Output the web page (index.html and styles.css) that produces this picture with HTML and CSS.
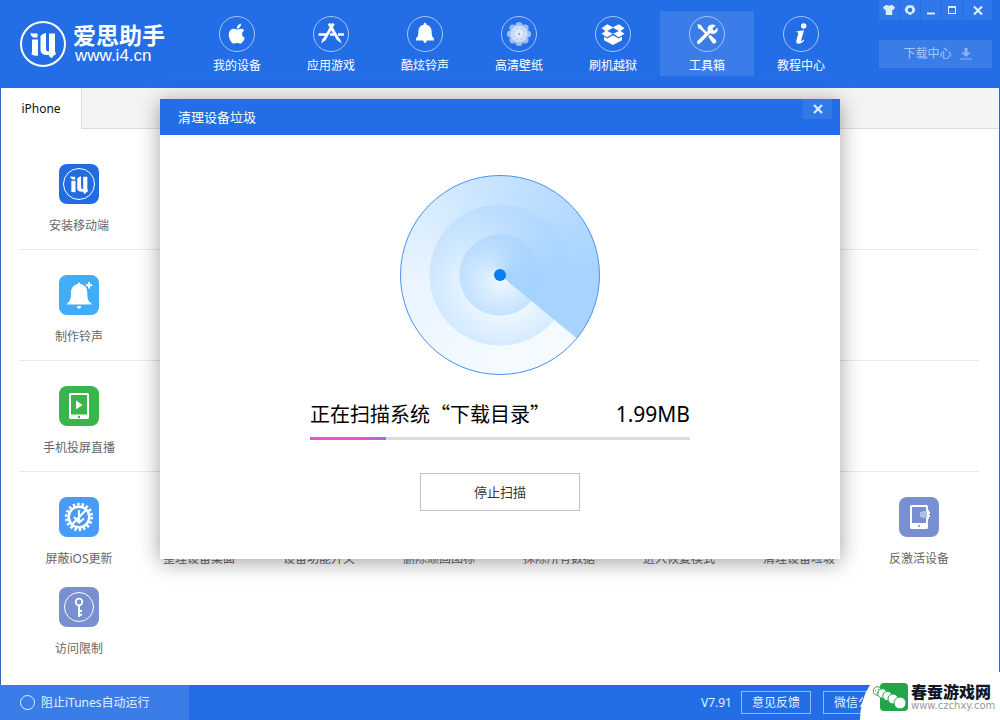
FILE: index.html
```html
<!DOCTYPE html>
<html lang="zh-CN">
<head>
<meta charset="utf-8">
<meta name="viewport" content="width=device-width, initial-scale=1">
<title>爱思助手</title>
<link rel="stylesheet" href="styles.css">
</head>
<body>
<svg class="defs" aria-hidden="true">
  <symbol id="i4" viewBox="0 0 46 46">
    <path d="M10.500 11.500q1 1.200 3.500 1h3.500v4h-4q-3-1-3-5zM12 18.500h6v16q-4 1-7-1.500l1-1zM20.500 15q2-2.500 5.500-3v16q0 2.500 3 2.500V12.500h6V30q1 2 .5 4-3 0-3 3-3.500-.5-3.500-3-8.500.5-8.500-5z"/>
  </symbol>
</svg>
<div class="app">
  <header class="header">
    <a class="logo" href="#">
      <svg class="logo-mark" viewBox="0 0 46 46"><circle cx="23" cy="23" r="22" fill="none" stroke="#fff" stroke-width="2"/><use href="#i4" fill="#fff"/></svg>
      <span class="logo-text"><span class="logo-name">爱思助手</span><span class="logo-url">www.i4.cn</span></span>
    </a>
    <nav class="nav">
      <a class="nav-item" href="#"><svg class="nav-icon" viewBox="0 0 36 36"><circle class="ring" cx="18" cy="18" r="17.500"/><path d="M18 13.500c1.500 0 2.700-1 4.400-.8 1.200.1 2.200.6 2.900 1.600-3.300 2.200-2.700 6.200.5 7.500-.7 2.100-2.200 5-3.900 5.700-1.500.5-2.300-.6-3.900-.6s-2.400 1.100-3.800.6c-2.700-1-5-6.600-4.300-10.300.6-3.300 3.400-4.900 5.900-4.200.8.2 1.500.5 2.200.5zM17.800 12.700c0-2.800 1.700-4.800 4.200-5.300.2 2.800-1.500 5.100-4.200 5.300z"/></svg>我的设备</a>
      <a class="nav-item" href="#"><svg class="nav-icon" viewBox="0 0 36 36"><circle class="ring" cx="18" cy="18" r="17.500"/><path class="line" d="M16 7.500l9.200 16M20.500 7.500L11 24" stroke-width="2.800"/><path class="line" d="M5.500 18.500h8.500M17 18.500h4M25 18.500h6" stroke-width="2.500"/><path d="M9.500 22.500l2.800 1.500-4 3.500zM24 24l2.600-1.500 2.200 5z"/></svg>应用游戏</a>
      <a class="nav-item" href="#"><svg class="nav-icon" viewBox="0 0 36 36"><circle class="ring" cx="18" cy="18" r="17.500"/><path d="M18 6.800q1.300 0 1.200 1.700c3.600.8 5.500 3.500 5.500 7.300 0 3.400.4 5.500 2.300 6.500v2.200h-7.200q-.2 2.400-1.800 2.400t-1.800-2.400H9v-2.200c1.900-1 2.300-3.100 2.300-6.500 0-3.800 1.900-6.500 5.500-7.300-.1-1.200.3-1.700 1.200-1.700z"/></svg>酷炫铃声</a>
      <a class="nav-item" href="#"><svg class="nav-icon" viewBox="0 0 36 36"><circle class="ring" cx="18" cy="18" r="17.500"/><g opacity=".55"><circle cx="18" cy="9.500" r="3.600"/><circle cx="24" cy="12" r="3.600"/><circle cx="26.500" cy="18" r="3.600"/><circle cx="24" cy="24" r="3.600"/><circle cx="18" cy="26.500" r="3.600"/><circle cx="12" cy="24" r="3.600"/><circle cx="9.500" cy="18" r="3.600"/><circle cx="12" cy="12" r="3.600"/></g><circle cx="18" cy="18" r="8.500" opacity=".5"/><circle cx="18" cy="18" r="5" opacity=".7"/><circle cx="18" cy="18" r="1" fill="#6c9ff0"/></svg>高清壁纸</a>
      <a class="nav-item" href="#"><svg class="nav-icon" viewBox="0 0 36 36"><circle class="ring" cx="18" cy="18" r="17.500"/><path d="M12.200 8.200L18 11.300l5.800-3.100 5.700 4-4 2.900 4 2.700-5.600 3.400L18 17.600l-5.900 3.600-5.600-3.400 4-2.700-4-2.900zM18 11.800l-5.700 3.200L18 18l5.700-3z" fill-rule="evenodd"/><path d="M9 20.800l3.300 1.800 5.700-3.400 5.700 3.400 3.300-1.800v3.400l-9 4.800-9-4.800z"/></svg>刷机越狱</a>
      <a class="nav-item active" href="#" aria-current="page"><svg class="nav-icon" viewBox="0 0 36 36"><circle class="ring" cx="18" cy="18" r="17.500"/><path d="M8.500 8l3.500 1 2 3.300 4.300 4.200-1.800 1.800-4.300-4.200L9 12z"/><path d="M19.200 20.700l2-2 5.500 5q1.400 1.700 0 3.200-1.500 1.400-3.200 0z"/><path class="line" d="M9.700 26.300L20.500 15.600" stroke-width="3.500" stroke-linecap="round"/><path d="M26.800 9.300L23.500 12.500l.5 1.700 1.700.4 2.800-3.100q.8 3.500-1.700 5.500-2.600 1.700-5.500.2l-2.500-2.600q-1-3 1.300-5 2.500-2 6.700-.3z"/></svg>工具箱</a>
      <a class="nav-item" href="#"><svg class="nav-icon" viewBox="0 0 36 36"><circle class="ring" cx="18" cy="18" r="17.500"/><circle cx="20.700" cy="10" r="2.700"/><path d="M13.700 15.200l7.300-1-3 10.500q.2 1 2.500-1.300l.8.800q-2.800 3.700-5.700 3.600-3-.2-2.200-3.400l1.900-6.800q.4-1.500-1.600-1.400z"/></svg>教程中心</a>
    </nav>
    <div class="header-side">
      <div class="window-controls">
        <button class="win-btn" aria-label="皮肤"><svg viewBox="0 0 12 12"><path d="M3.500.8q2.500 2 5 0L12 3l-1.300 3-1.400-.5V11H2.700V5.500L1.300 6 0 3z"/></svg></button>
        <button class="win-btn" aria-label="设置"><svg viewBox="0 0 12 12"><path d="M4.500 1.500L6 .7l1.500.8 2 .2.700 1.900 1.100 1.600-.4 1.600-.7 2-1.900.7L6.500 11h-1l-1.800-1.500-1.900-.7-.7-2-.4-1.600 1.100-1.600.7-1.900z"/><circle cx="6" cy="6" r="2.300" fill="#2f75e7"/></svg></button>
        <button class="win-btn" aria-label="最小化"><svg viewBox="0 0 12 12"><path d="M2 8.500h8v2H2z"/></svg></button>
        <button class="win-btn" aria-label="最大化"><svg viewBox="0 0 12 12"><path d="M2 2h8v8H2zM3 4v5h6V4z" fill-rule="evenodd"/></svg></button>
        <button class="win-btn wide" aria-label="关闭"><svg viewBox="0 0 12 12"><path class="cross" d="M2 2.500l8 8M10 2.500l-8 8"/></svg></button>
      </div>
      <button class="download">下载中心<svg viewBox="0 0 12 12"><path d="M4.500 0h3v4.500H11L6 9 1 4.500h3.500zM0 10.500h12v1H0z"/></svg></button>
    </div>
  </header>

  <main class="main">
    <div class="tabs"><button class="tab">iPhone</button></div>
    <div class="tools">
      <section class="tool-row">
        <button class="tool"><svg class="tool-icon install" viewBox="0 0 40 40"><circle cx="20" cy="20" r="15.500" fill="none" stroke="#fff"/><use href="#i4" x="4" y="4" width="32" height="32"/></svg>安装移动端</button>
      </section>
      <section class="tool-row">
        <button class="tool"><svg class="tool-icon ring-tone" viewBox="0 0 40 40"><path d="M20 7.500c1 0 1.300.7 1.300 1.600 4.800 1 7 4.200 7 9.200 0 5 .7 8.500 4.100 10v1.200H8.200v-1.200c2.900-1.500 3.800-5 3.800-10 0-5 2.200-8.200 6.700-9.200 0-.9.400-1.600 1.300-1.600zM17.700 31h4.600q-.3 2.700-2.300 2.700T17.700 31z"/><path d="M29 7h2v2.200h2.200v2H31v2.200h-2v-2.200h-2.200v-2H29z"/></svg>制作铃声</button>
      </section>
      <section class="tool-row">
        <button class="tool"><svg class="tool-icon cast" viewBox="0 0 40 40"><path d="M11.500 7h17q1.500 0 1.500 1.500v23q0 1.500-1.500 1.500h-17q-1.500 0-1.500-1.500v-23Q10 7 11.500 7zM12 9v19.500h16V9z" fill-rule="evenodd"/><path d="M17 14.500l6.500 4.500-6.500 4.500z"/><circle cx="20" cy="31" r="1.200" fill="#39b54a"/></svg>手机投屏直播</button>
      </section>
      <section class="tool-row last">
        <button class="tool"><svg class="tool-icon update" viewBox="0 0 40 40"><circle cx="20" cy="20" r="12.700" fill="none" stroke="#fff" stroke-width="3" stroke-dasharray="2.400 2.033"/><circle cx="20" cy="20" r="10.300" fill="none" stroke="#fff" stroke-width="2.500"/><path class="line" d="M20 13v11M15 20l5 5.500 5-4M28 12L13 27.500" stroke-width="2.200"/></svg>屏蔽iOS更新</button>
        <button class="tool"><svg class="tool-icon update" viewBox="0 0 40 40"><path d="M10 10h8v8h-8zM22 10h8v8h-8zM10 22h8v8h-8zM22 22h8v8h-8z"/></svg>整理设备桌面</button>
        <button class="tool"><svg class="tool-icon update" viewBox="0 0 40 40"><path d="M10 13h20v3H10zM10 24h20v3H10z"/></svg>设备功能开关</button>
        <button class="tool"><svg class="tool-icon update" viewBox="0 0 40 40"><path d="M12 14h16l-2 18H14zM10 10h20v2H10z"/></svg>删除顽固图标</button>
        <button class="tool"><svg class="tool-icon update" viewBox="0 0 40 40"><path d="M12 14h16l-2 18H14zM10 10h20v2H10z"/></svg>抹除所有数据</button>
        <button class="tool"><svg class="tool-icon update" viewBox="0 0 40 40"><path d="M13 8h14v24H13z"/></svg>进入恢复模式</button>
        <button class="tool"><svg class="tool-icon update" viewBox="0 0 40 40"><path d="M12 14h16l-2 18H14zM10 10h20v2H10z"/></svg>清理设备垃圾</button>
        <button class="tool"><svg class="tool-icon lock" viewBox="0 0 40 40"><path d="M12.500 8h15q1.500 0 1.500 1.500v21q0 1.500-1.500 1.500h-15q-1.500 0-1.500-1.500v-21Q11 8 12.500 8zM13 10v16h14V10z" fill-rule="evenodd"/><path d="M21 15h2v-1h6v7h-6v-1h-2z" fill="#b3bde9"/><path d="M28 13h2v2h1v2h-1v1h1v2h-1v2h-2z"/><circle cx="20" cy="29" r="1.100" fill="#7890d0"/></svg>反激活设备</button>
        <button class="tool"><svg class="tool-icon lock" viewBox="0 0 40 40"><circle cx="20" cy="20" r="14.500" fill="none" stroke="#fff"/><circle cx="20" cy="15" r="3.300" fill="none" stroke="#fff" stroke-width="1.800"/><path class="line" d="M20 18.500v11.500M20 24h3M20 27.800h3" stroke-width="2"/></svg>访问限制</button>
      </section>
    </div>
  </main>

  <footer class="footer">
    <label class="block-itunes"><input type="radio" name="itunes">阻止iTunes自动运行</label>
    <div class="footer-side"><span class="version">V7.91</span><button class="foot-btn">意见反馈</button><button class="foot-btn">微信公众号</button></div>
  </footer>

  <div class="overlay">
    <div class="dialog" role="dialog" aria-labelledby="dialog-title">
      <div class="dialog-head"><h1 class="dialog-title" id="dialog-title">清理设备垃圾</h1><button class="dialog-close" aria-label="关闭"><svg viewBox="0 0 12 12"><path class="cross" d="M2 2l8 8M10 2l-8 8"/></svg></button></div>
      <div class="dialog-body">
        <div class="radar"><span class="radar-dot"></span></div>
        <div class="status"><span>正在扫描系统“下载目录”</span><span class="size">1.99MB</span></div>
        <div class="progress"><div class="progress-fill" style="width:20%"></div></div>
        <button class="stop">停止扫描</button>
      </div>
    </div>
  </div>

  <div class="site-badge">
    <svg class="site-icon" viewBox="0 0 36 30"><rect x="7" y="1" width="28" height="28" rx="4" fill="#23a447"/><g fill="#fff" stroke="#23a447"><circle cx="4.500" cy="9" r="4.300"/><circle cx="9.500" cy="11.500" r="4.700"/><circle cx="14.500" cy="14" r="4.700"/><circle cx="20" cy="17" r="5"/><circle cx="27" cy="21" r="6"/></g><path d="M2.500 8v1M5.500 7v1M3.500 11l2-.5" stroke="#23a447" fill="none"/></svg>
    <span class="site-text"><span class="site-name">春蚕游戏网</span><span class="site-url">www.czchxy.com</span></span>
  </div>
</div>
</body>
</html>
```
FILE: styles.css
```css
* { box-sizing: border-box; }
body {
  margin: 0;
  font-family: "Noto Sans", "Noto Sans CJK SC", sans-serif;
  font-size: 12px;
  line-height: 18px;
  color: #666;
  background: #fff;
}
button { font: inherit; color: inherit; background: none; border: 0; padding: 0; }
a { color: inherit; text-decoration: none; }
.defs { position: absolute; width: 0; height: 0; }
.app { position: relative; display: flex; flex-direction: column; min-height: 100vh; }

.header { display: flex; padding: 0 8px 0 20px; height: 88px; background: #236ee6; color: #fff; }
.header svg { fill: #fff; }
.logo { display: flex; align-items: center; gap: 7px; width: 170px; }
.logo-mark { width: 46px; height: 46px; }
.logo-text { display: flex; flex-direction: column; }
.logo-name { font-family: "Noto Sans CJK SC", sans-serif; font-size: 23px; line-height: 23px; font-weight: 700; }
.logo-url { font-family: "Liberation Sans", Arial, sans-serif; font-size: 17px; line-height: 19px; padding-left: 2px; }
.nav { display: flex; padding-top: 11px; }
.nav-item { display: flex; flex-direction: column; align-items: center; gap: 5px; width: 94px; height: 65px; padding-top: 5px; }
.nav-item.active { background: #3b7de8; }
.nav-icon { width: 36px; height: 36px; }
.ring { fill: none; stroke: #a4c5f8; }
.line { fill: none; stroke: #fff; }
.cross { fill: none; stroke: #dff0ff; stroke-width: 2; }
.header-side { display: flex; flex-direction: column; gap: 20px; width: 113px; margin-left: auto; }
.window-controls { display: flex; gap: 1px; }
.win-btn { display: flex; align-items: center; justify-content: center; flex: 1; height: 20px; background: #3078e9; }
.win-btn.wide { flex: 0 0 29px; }
.win-btn svg { width: 12px; height: 12px; fill: #d8ebff; }
.download { display: flex; align-items: center; justify-content: center; gap: 8px; height: 28px; padding-left: 4px; background: #3b7de8; color: #a6c6f7; }
.download svg { width: 12px; height: 12px; fill: #8bb3f4; }

.main { flex: 1; border: solid #3566c4; border-width: 0 1px; }
.tabs { display: flex; height: 41px; background: #f4f4f4; border-bottom: 1px solid #dcdcdc; }
.tab { width: 81px; height: 41px; background: #fff; border-right: 1px solid #dcdcdc; color: #111; }
.tools { padding: 10px 20px 26px 18px; }
.tool-row { display: grid; grid-template-columns: repeat(8, 1fr); row-gap: 19px; padding: 25px 0 14px; border-bottom: 1px solid #e8e8e8; }
.tool-row.last { border-bottom: 0; padding-bottom: 0; }
.tool { display: flex; flex-direction: column; align-items: center; gap: 13px; white-space: nowrap; }
.tool-icon { width: 40px; height: 40px; border-radius: 8px; fill: #fff; }
.install { background: #216ce0; }
.ring-tone { background: #41adf7; }
.cast { background: #39b54a; }
.update { background: #4a9bf5; }
.lock { background: #7890d0; }

.footer { display: flex; justify-content: space-between; height: 35px; padding-right: 95px; background: #236ee6; color: #e4f1ff; }
.block-itunes { display: flex; align-items: center; gap: 6px; width: 189px; padding-left: 20px; background: #3b7de8; }
.block-itunes input { appearance: none; width: 15px; height: 15px; margin: 0; border: 1px solid #e4f1ff; border-radius: 50%; }
.footer-side { display: flex; align-items: center; gap: 12px; }
.version { margin-right: -3px; }
.foot-btn { height: 23px; padding: 0 10px; border: 1px solid #8ebcf8; }

.overlay { position: absolute; top: 99px; left: 0; right: 0; display: flex; justify-content: center; }
.dialog { width: 68%; background: #fff; box-shadow: 0 3px 20px rgba(0, 0, 0, .38); }
.dialog-head { display: flex; justify-content: space-between; align-items: flex-start; padding: 0 8px 0 18px; background: #236ee6; color: #fff; }
.dialog-title { margin: 0; font-size: 13px; line-height: 36px; font-weight: 400; }
.dialog-close { display: flex; align-items: center; justify-content: center; width: 29px; height: 20px; background: #3279e8; }
.dialog-close svg { width: 12px; height: 12px; }
.dialog-body { display: flex; flex-direction: column; align-items: center; padding: 40px 24px 48px; }
.radar {
  display: flex;
  align-items: center;
  justify-content: center;
  width: 200px;
  height: 200px;
  border: 1px solid #4792ee;
  border-radius: 50%;
  background:
    conic-gradient(from 129deg, rgba(163, 210, 255, .95) 0, rgba(163, 210, 255, 0) .3% 14%, rgba(163, 210, 255, .15) 39%, rgba(163, 210, 255, .55) 62%, rgba(163, 210, 255, .95) 88% 100%),
    radial-gradient(circle, #f6fbff 0, #c6e2ff 40px, #ecf6ff 41px, #d6ebff 70px, #f5faff 71px, #f5faff 100px);
}
.radar-dot { width: 12px; height: 12px; border-radius: 50%; background: #077df5; }
.status { display: flex; justify-content: space-between; width: 380px; max-width: 100%; margin-top: 24px; font-family: "Noto Sans CJK SC", sans-serif; font-size: 20px; line-height: 30px; color: #000; }
.size { font-family: "Noto Sans", sans-serif; font-size: 21px; }
.progress { width: 380px; max-width: 100%; height: 3px; margin-top: 8px; background: #ddd; }
.progress-fill { height: 3px; background: linear-gradient(90deg, #e84fdc 70%, #a46ae6); }
.stop { width: 160px; height: 38px; margin-top: 33px; border: 1px solid #c4c4c4; font-size: 13px; color: #333; }

.site-badge { position: absolute; right: 0; bottom: 0; display: flex; align-items: center; gap: 2px; width: 140px; height: 48px; padding: 2px 4px 0 13px; background: #fff; border-top-left-radius: 32px 48px; }
.site-icon { flex: none; width: 36px; height: 30px; }
.site-text { display: flex; flex-direction: column; white-space: nowrap; }
.site-name { font-family: "Noto Sans CJK SC", sans-serif; font-size: 16px; line-height: 18px; font-weight: 900; color: #111827; }
.site-url { font-family: "DejaVu Sans", sans-serif; font-size: 10px; line-height: 12px; color: #999; }
```
